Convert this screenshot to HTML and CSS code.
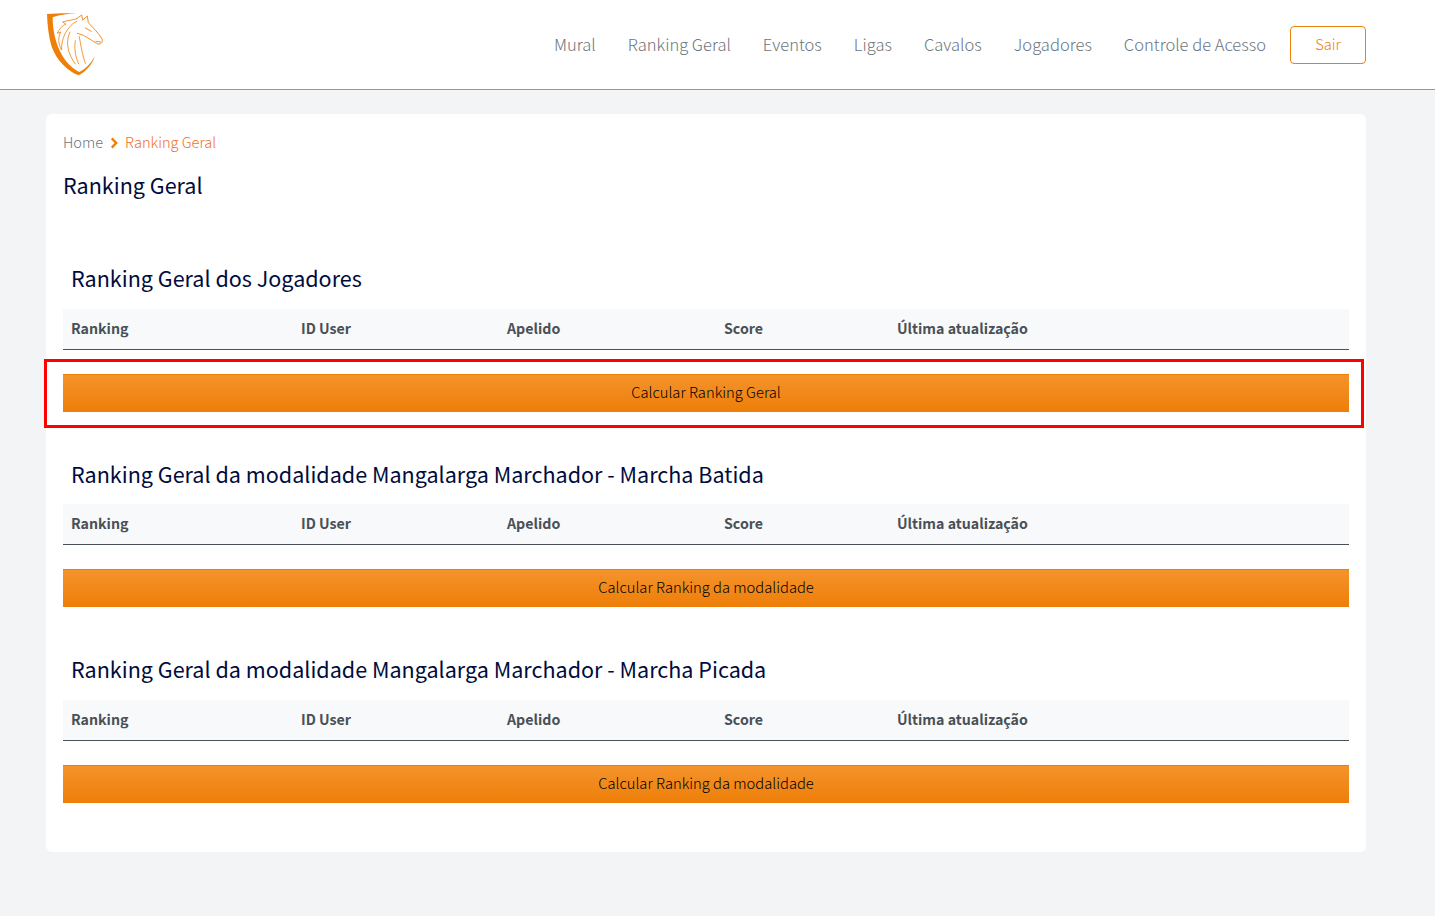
FILE: index.html
```html
<!DOCTYPE html>
<html lang="pt-BR">
<head>
<meta charset="utf-8">
<title>Ranking Geral</title>
<link rel="stylesheet" href="styles.css">
</head>
<body>
<header class="topbar">
  <a class="logo" href="#" aria-label="Logo">
    <svg viewBox="48 36 174 198" width="58" height="66" fill="none">
      <path d="M51 42 C80 39 115 39 141 40 C115 42 90 44 68 52 C68 90 76 130 96 165 C110 190 130 207 148 216 C165 208 182 192 195 168 C186 195 168 214 146 226 C110 212 80 180 65 140 C56 110 52 75 51 42Z" fill="#ee8009"/>
      <path d="M140 56 L155 45 L158 60 L172 48 L175 68 C190 84 206 100 215 115 C220 125 214 134 204 132 C194 128 176 114 160 106 L142 100" stroke="#ee8009" stroke-width="2.6" stroke-linejoin="round" stroke-linecap="round"/>
      <path d="M140 56 C126 61 112 61 98 66 L108 72 C98 76 88 86 82 100 L92 96 C84 112 84 132 95 150 C94 125 102 100 118 82 C124 74 132 68 140 64" stroke="#ee8009" stroke-width="2.4" stroke-linejoin="round" stroke-linecap="round"/>
      <path d="M120 96 C106 125 112 160 136 192 M148 110 C152 135 157 165 166 190 M136 122 C132 145 136 170 146 192" stroke="#ee8009" stroke-width="2.4" stroke-linecap="round"/>
      <path d="M166 84 L184 94 M198 124 L212 126" stroke="#ee8009" stroke-width="2.6" stroke-linecap="round"/>
    </svg>
  </a>
  <nav class="menu">
    <a class="menu-link" href="#">Mural</a>
    <a class="menu-link" href="#">Ranking Geral</a>
    <a class="menu-link" href="#">Eventos</a>
    <a class="menu-link" href="#">Ligas</a>
    <a class="menu-link" href="#">Cavalos</a>
    <a class="menu-link" href="#">Jogadores</a>
    <a class="menu-link" href="#">Controle de Acesso</a>
    <a class="logout" href="#">Sair</a>
  </nav>
</header>
<main class="card">
  <ol class="crumbs">
    <li class="crumb-home">Home</li>
    <li class="crumb-sep">
      <svg viewBox="0 0 8 12" width="8" height="12" fill="none"><path d="M1.8 1.4 L6.2 6 L1.8 10.6" stroke="#ee8009" stroke-width="2.4"/></svg>
    </li>
    <li class="crumb-current">Ranking Geral</li>
  </ol>
  <h1 class="page-title">Ranking Geral</h1>

  <section class="block block-first">
    <h2 class="block-title">Ranking Geral dos Jogadores</h2>
    <div class="thead"><span>Ranking</span><span>ID User</span><span>Apelido</span><span>Score</span><span>Última atualização</span></div>
    <div class="action action-marked">
      <button class="calc" type="button">Calcular Ranking Geral</button>
      <div class="marker"></div>
    </div>
  </section>

  <section class="block">
    <h2 class="block-title">Ranking Geral da modalidade Mangalarga Marchador - Marcha Batida</h2>
    <div class="thead"><span>Ranking</span><span>ID User</span><span>Apelido</span><span>Score</span><span>Última atualização</span></div>
    <div class="action">
      <button class="calc" type="button">Calcular Ranking da modalidade</button>
    </div>
  </section>

  <section class="block">
    <h2 class="block-title">Ranking Geral da modalidade Mangalarga Marchador - Marcha Picada</h2>
    <div class="thead"><span>Ranking</span><span>ID User</span><span>Apelido</span><span>Score</span><span>Última atualização</span></div>
    <div class="action">
      <button class="calc" type="button">Calcular Ranking da modalidade</button>
    </div>
  </section>
</main>
</body>
</html>
```
FILE: styles.css
```css
* { box-sizing: border-box; }
html, body { margin: 0; padding: 0; }
body {
  min-height: 916px;
  background: #f3f4f6;
  font-family: "Noto Sans CJK SC", "Noto Sans", sans-serif;
  font-size: 16px;
  color: #212529;
  overflow: hidden;
}
.topbar {
  height: 90px;
  background: #fff;
  border-bottom: 1px solid #e8851a;
  padding: 12px 69px 0 46px;
  display: flex;
  justify-content: space-between;
  align-items: flex-start;
}
.logo { display: block; width: 58px; height: 66px; }
.logo svg { display: block; }
.menu { display: flex; align-items: center; margin-top: 14px; }
.menu-link {
  font-size: 16.55px;
  line-height: 36px;
  padding-bottom: 2px;
  font-weight: 300;
  color: #6c757d;
  text-decoration: none;
  margin-right: 32px;
}
.menu-link:nth-child(7) { margin-right: 24px; }
.logout {
  width: 76px;
  height: 38px;
  border: 1px solid #ee8009;
  border-radius: 4px;
  color: #ee8009;
  font-size: 14.72px;
  font-weight: 300;
  line-height: 34px;
  text-align: center;
  text-decoration: none;
}
.card {
  width: 1320px;
  height: 738px;
  margin: 24px 0 0 46px;
  padding: 16px 17px 17px;
  background: #fff;
  border-radius: 6px;
}
.crumbs {
  list-style: none;
  margin: 0;
  padding: 0;
  height: 24px;
  display: flex;
  align-items: center;
  font-size: 14.6px;
  font-weight: 300;
  line-height: 24px;
}
.crumb-home { color: #6c757d; }
.crumb-sep { display: flex; margin: 1px 7px 0 7px; }
.crumb-current { color: #f0701f; }
.page-title {
  margin: 18px 0 0;
  font-size: 21.55px;
  line-height: 26px;
  font-weight: 400;
  color: #000c3d;
}
.block { margin-top: 48.75px; }
.block-first { margin-top: 67.3px; }
.block-title {
  margin: 0 0 17.7px;
  padding-left: 8px;
  font-size: 21.55px;
  line-height: 26px;
  font-weight: 400;
  color: #000c3d;
}
.thead {
  display: grid;
  grid-template-columns: 230px 206px 217px 173px 1fr;
  height: 41px;
  padding-left: 8px;
  background: #f8f9fa;
  border-bottom: 1px solid #495057;
  font-size: 14.2px;
  font-weight: 700;
  line-height: 38px;
  color: #495057;
}
.action { position: relative; margin-top: 24px; }
.calc {
  display: block;
  width: 100%;
  height: 38px;
  padding: 0 0 4px;
  border: 0;
  border-top: 1px solid #ee8009;
  background: linear-gradient(#f4932c, #ee7e08);
  font-family: inherit;
  font-size: 14.72px;
  font-weight: 300;
  color: #000;
}
.marker {
  position: absolute;
  left: -19px;
  right: -15px;
  top: -15px;
  bottom: -16px;
  border: 3px solid #f00;
  pointer-events: none;
}
```
